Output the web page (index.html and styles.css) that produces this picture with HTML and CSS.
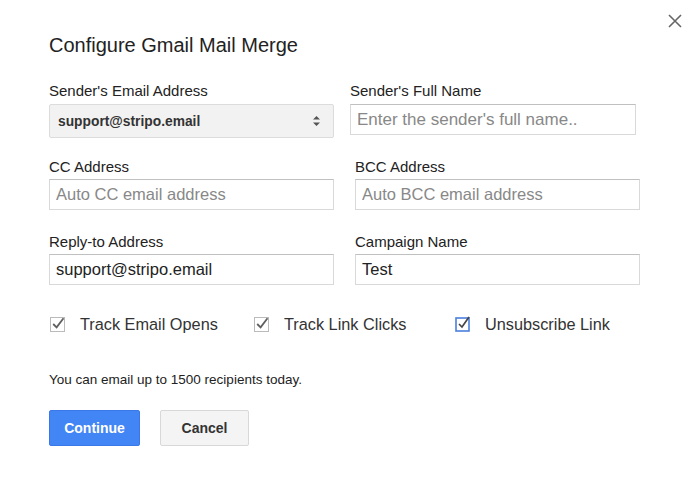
FILE: index.html
```html
<!DOCTYPE html>
<html lang="en">
<head>
    <meta charset="UTF-8">
    <meta name="viewport" content="width=device-width, initial-scale=1.0">
    <title>Configure Gmail Mail Merge</title>
    <link rel="stylesheet" href="styles.css">
</head>
<body>
    <div class="dialog">
        <button class="close-btn" type="button" aria-label="Close">
            <svg width="16" height="16" viewBox="0 0 16 16">
                <path d="M2 2 L14 14 M14 2 L2 14" stroke="#666" stroke-width="1.6" fill="none"/>
            </svg>
        </button>

        <h1>Configure Gmail Mail Merge</h1>

        <form class="merge-form">
            <div class="row row-first">
                <div class="field">
                    <label for="sender">Sender's Email Address</label>
                    <div class="select-box" id="sender">
                        <span>support@stripo.email</span>
                        <svg width="9" height="12" viewBox="0 0 9 12">
                            <path d="M4.5 1 L8 4.5 L1 4.5 Z M4.5 11 L8 7.5 L1 7.5 Z" fill="#555"/>
                        </svg>
                    </div>
                </div>
                <div class="field field-shift">
                    <label for="fullName">Sender's Full Name</label>
                    <input type="text" id="fullName" placeholder="Enter the sender's full name..">
                </div>
            </div>

            <div class="row">
                <div class="field">
                    <label for="cc">CC Address</label>
                    <input type="text" id="cc" placeholder="Auto CC email address">
                </div>
                <div class="field">
                    <label for="bcc">BCC Address</label>
                    <input type="text" id="bcc" placeholder="Auto BCC email address">
                </div>
            </div>

            <div class="row">
                <div class="field">
                    <label for="replyTo">Reply-to Address</label>
                    <input type="text" id="replyTo" value="support@stripo.email">
                </div>
                <div class="field">
                    <label for="campaign">Campaign Name</label>
                    <input type="text" id="campaign" value="Test">
                </div>
            </div>

            <div class="checks">
                <div class="check check-opens">
                    <svg width="16" height="16" viewBox="0 0 16 16">
                        <rect x="0.5" y="1.5" width="14" height="14" fill="#fff" stroke="#bbb"/>
                        <path d="M3.2 8 L6.6 11.3 L13.5 2.3" stroke="#5f5f5f" stroke-width="1.8" fill="none"/>
                    </svg>
                    <span>Track Email Opens</span>
                </div>
                <div class="check check-clicks">
                    <svg width="16" height="16" viewBox="0 0 16 16">
                        <rect x="0.5" y="1.5" width="14" height="14" fill="#fff" stroke="#bbb"/>
                        <path d="M3.2 8 L6.6 11.3 L13.5 2.3" stroke="#5f5f5f" stroke-width="1.8" fill="none"/>
                    </svg>
                    <span>Track Link Clicks</span>
                </div>
                <div class="check">
                    <svg width="16" height="16" viewBox="0 0 16 16">
                        <rect x="1" y="2" width="13" height="13" fill="#fff" stroke="#4a7fdc" stroke-width="1.6"/>
                        <path d="M4 8 L7 11 L14 1" stroke="#444" stroke-width="1.7" fill="none"/>
                    </svg>
                    <span>Unsubscribe Link</span>
                </div>
            </div>

            <p class="quota">You can email up to 1500 recipients today.</p>

            <div class="actions">
                <button type="submit" class="btn-primary">Continue</button>
                <button type="button" class="btn-secondary">Cancel</button>
            </div>
        </form>
    </div>
</body>
</html>
```

FILE: styles.css
```css
body {
    margin: 0;
    padding: 0;
    background: #fff;
    font-family: "Liberation Sans", Arial, sans-serif;
    color: #222;
}

.dialog {
    position: relative;
    width: 698px;
    height: 495px;
    padding: 33px 0 0 49px;
    box-sizing: border-box;
}

.close-btn {
    position: absolute;
    top: 13px;
    left: 667px;
    padding: 0;
    border: none;
    background: none;
    cursor: pointer;
}

h1 {
    margin: 0 0 25px;
    font-size: 20px;
    font-weight: normal;
    line-height: 24px;
    color: #222;
}

.row {
    display: grid;
    grid-template-columns: 285px 285px;
    column-gap: 21px;
    margin-bottom: 23px;
}

.row-first {
    margin-bottom: 20px;
}

.field {
    display: flex;
    flex-direction: column;
}

.field-shift {
    margin-left: -5px;
}

label {
    font-size: 15px;
    line-height: 17px;
    margin-bottom: 4px;
    color: #222;
}

.row-first label {
    margin-bottom: 5px;
}

input {
    height: 31px;
    box-sizing: border-box;
    border: 1px solid #d9d9d9;
    border-top-color: #c0c0c0;
    padding: 0 6px;
    font-family: inherit;
    font-size: 16.5px;
    color: #222;
    outline: none;
}

.field-shift input {
    width: 286px;
    font-size: 17px;
}

input::placeholder {
    color: #888;
}

.select-box {
    height: 34px;
    box-sizing: border-box;
    border: 1px solid #dcdcdc;
    border-radius: 2px;
    background: #f2f2f2;
    display: flex;
    align-items: center;
    justify-content: space-between;
    padding: 0 12px 0 8px;
    font-size: 13.8px;
    font-weight: bold;
    color: #333;
}

.checks {
    display: flex;
    align-items: center;
    margin-top: 29px;
    height: 20px;
}

.check {
    display: flex;
    align-items: center;
    gap: 14px;
    font-size: 16.3px;
    color: #333;
}

.check-opens {
    width: 204px;
}

.check-clicks {
    width: 202px;
}

.check-opens svg,
.check-clicks svg {
    margin-left: 1px;
}

.quota {
    margin: 38px 0 0;
    font-size: 13.5px;
    line-height: 15px;
    color: #222;
}

.actions {
    display: flex;
    gap: 20px;
    margin-top: 23px;
}

.actions button {
    height: 36px;
    border-radius: 2px;
    font-family: inherit;
    font-size: 14px;
    font-weight: bold;
    cursor: pointer;
}

.btn-primary {
    width: 91px;
    background: #4285f4;
    border: 1px solid #3b78e7;
    color: #fff;
}

.btn-secondary {
    width: 89px;
    background: #f4f4f4;
    border: 1px solid #d8d8d8;
    color: #333;
}
```
